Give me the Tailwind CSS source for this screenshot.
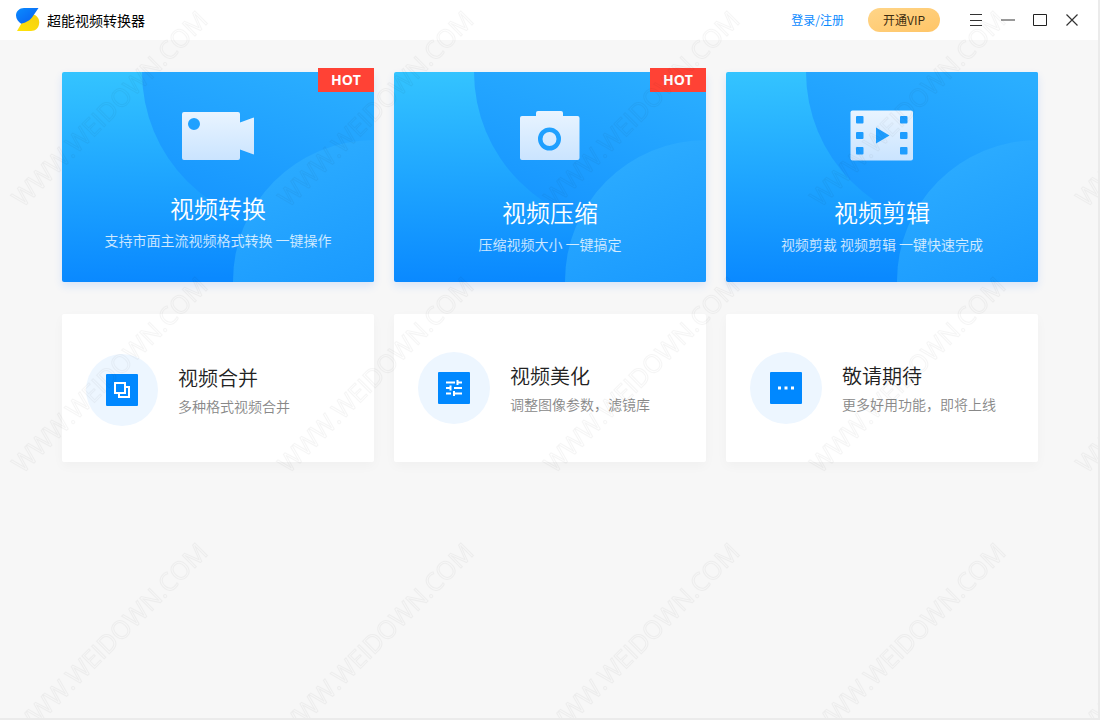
<!DOCTYPE html>
<html lang="zh-CN">
<head>
<meta charset="utf-8">
<meta name="viewport" content="width=device-width, initial-scale=1">
<title>超能视频转换器</title>
<script src="https://cdn.jsdelivr.net/npm/@tailwindcss/browser@4"></script>
</head>
<body class="bg-[#f7f7f7] font-['Noto_Sans_CJK_SC',sans-serif] text-[#222]">
<svg class="absolute size-0" aria-hidden="true">
  <defs>
    <linearGradient id="base" x1="0" y1="0" x2=".04" y2="1"><stop offset="0" stop-color="#34c4ff"/><stop offset=".5" stop-color="#1fa6ff"/><stop offset="1" stop-color="#0a89ff"/></linearGradient>
    <linearGradient id="arc1" x1=".6" y1=".5" x2=".45" y2="1"><stop offset="0" stop-color="#2aaeff"/><stop offset="1" stop-color="#1796ff"/></linearGradient>
    <linearGradient id="arc2" x1=".3" y1="0" x2=".5" y2=".55"><stop offset="0" stop-color="#2cacff"/><stop offset="1" stop-color="#1898ff"/></linearGradient>
    <linearGradient id="ice" x1="0" y1="0" x2="0" y2="1"><stop offset="0" stop-color="#e9f4ff"/><stop offset="1" stop-color="#cae4ff"/></linearGradient>
    <symbol id="waves" viewBox="0 0 312 210" preserveAspectRatio="none">
      <rect width="312" height="210" fill="url(#base)"/>
      <circle cx="235" cy="0" r="155" fill="url(#arc1)"/>
      <circle cx="312" cy="209" r="141" fill="url(#arc2)"/>
    </symbol>
    <pattern id="mark" width="266" height="266" patternUnits="userSpaceOnUse">
      <g transform="translate(116 115) rotate(-45)" font-family="Open Sans, sans-serif" font-size="25" font-weight="500" text-anchor="middle" fill="none">
        <text stroke="#000" stroke-opacity=".04" stroke-width="1">WWW.WEIDOWN.COM</text>
      </g>
    </pattern>
  </defs>
</svg>

<div class="relative flex min-h-screen flex-col overflow-hidden">
  <header class="flex h-10 items-center bg-white pr-3 pl-4">
    <svg class="size-6" viewBox="0 0 24 24" aria-hidden="true">
      <defs>
        <linearGradient id="lb" x1="0" y1="0" x2="1" y2="1"><stop offset="0" stop-color="#0a8cff"/><stop offset="1" stop-color="#0a5cf0"/></linearGradient>
        <linearGradient id="ly" x1="0" y1="1" x2="1" y2="0"><stop offset="0" stop-color="#ffe30a"/><stop offset="1" stop-color="#f5cf10"/></linearGradient>
      </defs>
      <path d="M1 23 6 14.500 17.500 6.500c4 1.200 5.700 4.700 5.700 8 0 5-3.700 8.500-8.200 8.500Z" fill="url(#ly)"/>
      <path d="M22.500 0H8C3.500 0 0 3.200 0 7.500c0 3.700 2.500 6.500 5.300 8.300 3.200-1.200 7.200-2 10.700-6.300Z" fill="url(#lb)"/>
    </svg>
    <h1 class="ml-[7px] flex-1 text-sm text-black">超能视频转换器</h1>
    <a href="#" class="text-xs text-[#0a8aff]">登录/注册</a>
    <button class="mr-5 ml-6 h-6 w-[72px] rounded-full bg-linear-to-br from-[#ffd588] to-[#ffc566] text-xs text-[#3d2c10]">开通VIP</button>
    <button aria-label="菜单" class="flex h-10 w-8 items-center justify-center"><svg class="size-4" viewBox="0 0 16 16" fill="none" stroke="#333"><path d="M2 2.500h12M2 8.500h12M2 13.500h12"/></svg></button>
    <button aria-label="最小化" class="flex h-10 w-8 items-center justify-center"><svg class="size-4" viewBox="0 0 16 16"><path d="M1 8h14" stroke="#999" stroke-width="2"/></svg></button>
    <button aria-label="最大化" class="flex h-10 w-8 items-center justify-center"><svg class="size-4" viewBox="0 0 16 16" fill="none" stroke="#222"><path d="M1.500 2.500h13v11h-13z"/></svg></button>
    <button aria-label="关闭" class="flex h-10 w-8 items-center justify-center"><svg class="size-4" viewBox="0 0 16 16" fill="none" stroke="#333" stroke-width="1.200"><path d="m2.500 2.500 11 11m0-11-11 11"/></svg></button>
  </header>

  <main class="flex flex-col gap-8 px-[62px] pt-8">
    <section class="grid grid-cols-3 gap-5 text-white">
      <button class="relative flex h-[210px] flex-col items-center rounded-xs pt-10 shadow-[0_4px_8px_rgba(40,120,255,0.14)]">
        <svg class="absolute inset-0 size-full rounded-xs" aria-hidden="true"><use href="#waves"/></svg>
        <span class="absolute -top-1 right-0 flex h-6 w-14 items-center justify-center bg-[#ff4235] font-['Open_Sans',sans-serif] text-sm font-bold">HOT</span>
        <svg class="relative h-12 w-[72px]" viewBox="0 0 72 48" aria-hidden="true"><path fill="url(#ice)" fill-rule="evenodd" d="M2 0h54a2 2 0 0 1 2 2v8.500L71 5.700q1-.4 1 .8v35q0 1.200-1 .8L58 37.500V46a2 2 0 0 1-2 2H2a2 2 0 0 1-2-2V2a2 2 0 0 1 2-2Zm10 6a6 6 0 1 0 0 12 6 6 0 0 0 0-12Z"/></svg>
        <span class="relative mt-[30px] text-2xl leading-9 font-[350]">视频转换</span>
        <span class="relative text-sm leading-7 font-[350] text-white/80">支持市面主流视频格式转换 一键操作</span>
      </button>
      <button class="relative flex h-[210px] flex-col items-center rounded-xs pt-9 shadow-[0_4px_8px_rgba(40,120,255,0.14)]">
        <svg class="absolute inset-0 size-full rounded-xs" aria-hidden="true"><use href="#waves"/></svg>
        <span class="absolute -top-1 right-0 flex h-6 w-14 items-center justify-center bg-[#ff4235] font-['Open_Sans',sans-serif] text-sm font-bold">HOT</span>
        <svg class="relative h-14 w-16" viewBox="0 0 64 56" aria-hidden="true"><path fill="url(#ice)" fill-rule="evenodd" d="M4 8h14V5a2 2 0 0 1 2-2h23a2 2 0 0 1 2 2v3h14.500a2 2 0 0 1 2 2v40a2 2 0 0 1-2 2H4a2 2 0 0 1-2-2V10a2 2 0 0 1 2-2Zm27.500 11.500a11.500 11.500 0 1 0 0 23 11.500 11.500 0 0 0 0-23Zm0 4.500a7 7 0 1 1 0 14 7 7 0 0 1 0-14Z"/></svg>
        <span class="relative mt-[30px] text-2xl leading-9 font-[350]">视频压缩</span>
        <span class="relative text-sm leading-7 font-[350] text-white/80">压缩视频大小 一键搞定</span>
      </button>
      <button class="relative flex h-[210px] flex-col items-center rounded-xs pt-9 shadow-[0_4px_8px_rgba(40,120,255,0.14)]">
        <svg class="absolute inset-0 size-full rounded-xs" aria-hidden="true"><use href="#waves"/></svg>
        <svg class="relative h-14 w-16" viewBox="0 0 64 56" aria-hidden="true">
          <rect x=".5" y="2.500" width="62.500" height="50" rx="2" fill="url(#ice)"/>
          <g fill="#1e9dff"><rect x="6" y="8" width="7.500" height="7.500" rx="1"/><rect x="6" y="24" width="7.500" height="7" rx="1"/><rect x="6" y="39" width="7.500" height="7.500" rx="1"/><rect x="50" y="8" width="7.500" height="7.500" rx="1"/><rect x="50" y="24" width="7.500" height="7" rx="1"/><rect x="50" y="39" width="7.500" height="7.500" rx="1"/><path d="M26 19.500 39.500 27.500 26 35.500Z"/></g>
        </svg>
        <span class="relative mt-[30px] text-2xl leading-9 font-[350]">视频剪辑</span>
        <span class="relative text-sm leading-7 font-[350] text-white/80">视频剪裁 视频剪辑 一键快速完成</span>
      </button>
    </section>

    <section class="grid grid-cols-3 gap-5">
      <button class="flex h-[148px] items-center gap-5 rounded-xs bg-white pt-1 pl-6 text-left shadow-[0_4px_12px_rgba(0,0,0,0.03)]">
        <span class="flex size-[72px] items-center justify-center rounded-full bg-[#edf6ff]">
          <svg class="size-8" viewBox="0 0 32 32" fill="none" aria-hidden="true"><rect width="32" height="32" rx="1" fill="#0088ff"/><path stroke="#fff" stroke-width="2" d="M9 9h10v10H9zM20 13h3v10H13v-3"/></svg>
        </span>
        <span class="flex flex-col pt-1 font-[350]"><span class="text-xl leading-7">视频合并</span><span class="text-sm leading-7 text-[#888]">多种格式视频合并</span></span>
      </button>
      <button class="flex h-[148px] items-center gap-5 rounded-xs bg-white pl-6 text-left shadow-[0_4px_12px_rgba(0,0,0,0.03)]">
        <span class="flex size-[72px] items-center justify-center rounded-full bg-[#edf6ff]">
          <svg class="size-8" viewBox="0 0 32 32" fill="none" aria-hidden="true"><rect width="32" height="32" rx="1" fill="#0088ff"/><path stroke="#fff" stroke-width="2" d="M8 10.500h9M19 10.500h5M19.500 8v5M8 16h5M12.500 13.500v5M16 16h8M8 21.500h5M16 19v5M16 21.500h8"/></svg>
        </span>
        <span class="flex flex-col pt-1 font-[350]"><span class="text-xl leading-7">视频美化</span><span class="text-sm leading-7 text-[#888]">调整图像参数，滤镜库</span></span>
      </button>
      <button class="flex h-[148px] items-center gap-5 rounded-xs bg-white pl-6 text-left shadow-[0_4px_12px_rgba(0,0,0,0.03)]">
        <span class="flex size-[72px] items-center justify-center rounded-full bg-[#edf6ff]">
          <svg class="size-8" viewBox="0 0 32 32" aria-hidden="true"><rect width="32" height="32" rx="1" fill="#0088ff"/><path fill="#fff" d="M8 14.500h3v3H8zM14.500 14.500h3v3h-3zM21 14.500h3v3h-3z"/></svg>
        </span>
        <span class="flex flex-col pt-1 font-[350]"><span class="text-xl leading-7">敬请期待</span><span class="text-sm leading-7 text-[#888]">更多好用功能，即将上线</span></span>
      </button>
    </section>
  </main>

  <svg class="pointer-events-none absolute inset-0 size-full" aria-hidden="true"><rect width="100%" height="100%" fill="url(#mark)"/></svg>
  <div class="pointer-events-none absolute inset-0 border-r-2 border-b-2 border-[#ebebeb]"></div>
</div>
</body>
</html>
